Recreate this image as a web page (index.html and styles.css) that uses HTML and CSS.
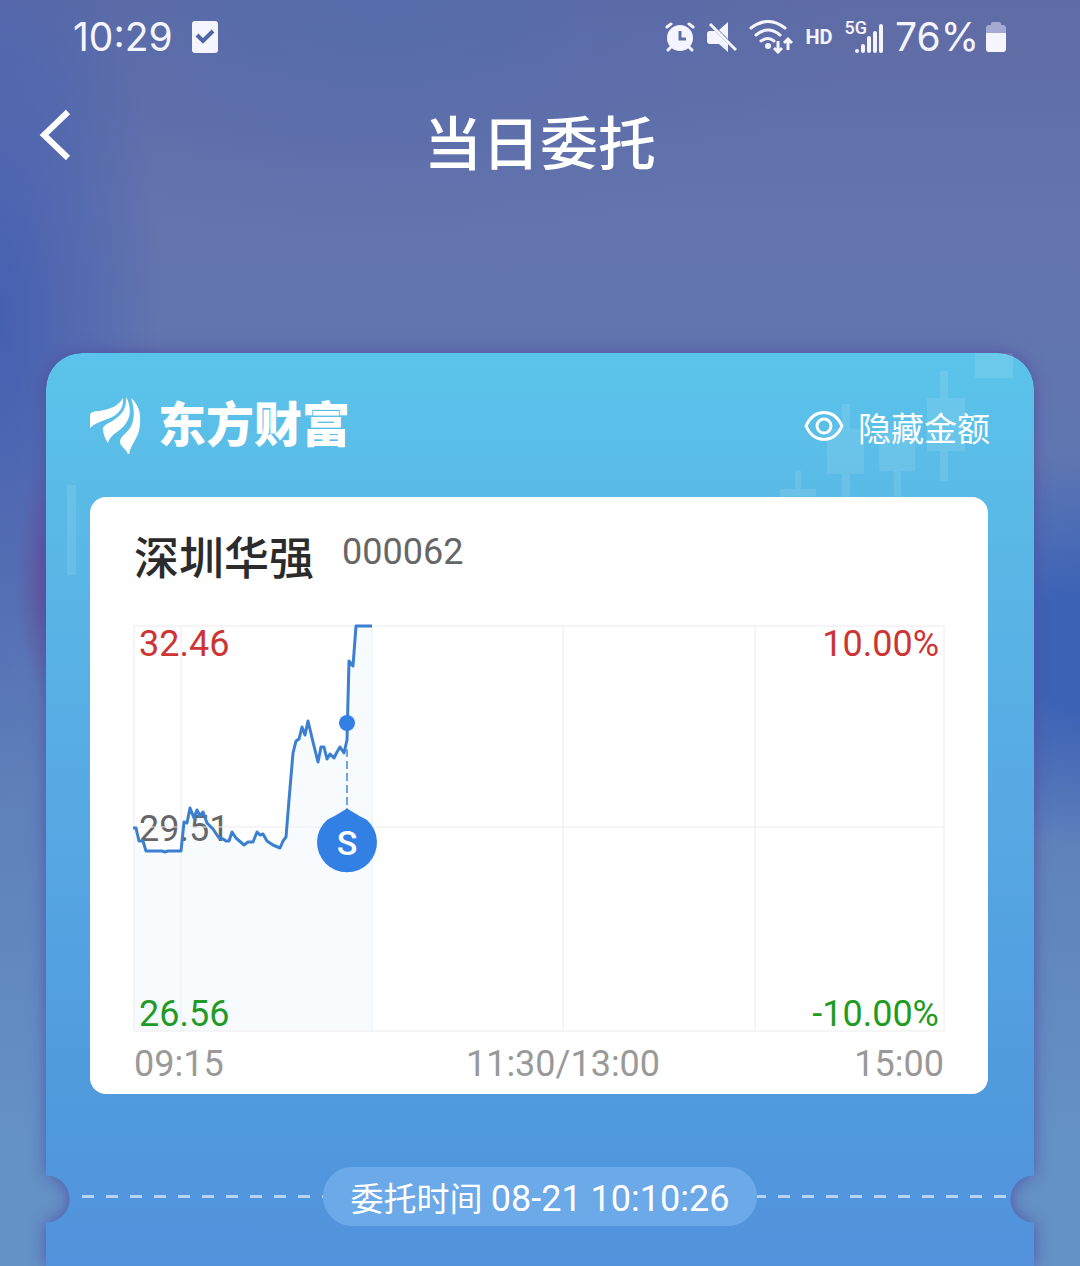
FILE: index.html
```html
<!DOCTYPE html>
<html lang="zh-CN">
<head>
    <meta charset="UTF-8">
    <meta name="viewport" content="width=device-width, initial-scale=1.0">
    <title>当日委托</title>
    <link rel="stylesheet" href="styles.css">
</head>
<body>

    <!-- Phone status bar -->
    <div class="status-bar">
        <div class="status-group status-left">
            <span class="status-text">10:29</span>
            <svg width="28" height="34" viewBox="0 0 28 34">
                <rect x="1" y="1" width="26" height="32" rx="3" fill="#f5f5ff"/>
                <path d="M6 15l6 6 10-10" fill="none" stroke="#4f66a6" stroke-width="4"/>
            </svg>
        </div>
        <div class="status-group status-right">
            <!-- alarm -->
            <svg width="30" height="30" viewBox="0 0 30 30">
                <circle cx="15" cy="16" r="13" fill="#f5f5ff"/>
                <path d="M2 5l4-3M28 5l-4-3M6 25l-3 3M24 25l3 3" stroke="#f5f5ff" stroke-width="3" stroke-linecap="round"/>
                <path d="M15 9v8h6" fill="none" stroke="#5f6fa8" stroke-width="3"/>
            </svg>
            <!-- muted speaker -->
            <svg width="30" height="30" viewBox="0 0 30 30">
                <path d="M3 9h5l13 13v8l-9-8H3q-3 0-3-3v-7q0-3 3-3zM12 8l9-8v17z" fill="#f5f5ff"/>
                <path d="M3 2l26 26" stroke="#f5f5ff" stroke-width="3"/>
            </svg>
            <!-- wifi -->
            <svg width="44" height="34" viewBox="0 0 44 34">
                <path d="M2 8q17-13 34 0M7 15q12-10 24 0M12 21q7-5 13 0" fill="none" stroke="#f5f5ff" stroke-width="3" stroke-linecap="round"/>
                <circle cx="19" cy="26" r="3" fill="#f5f5ff"/>
                <path d="M29 21v11M25 28l4 4 4-4M39 30V19M35 23l4-4 4 4" fill="none" stroke="#f5f5ff" stroke-width="3"/>
            </svg>
            <span class="status-hd">HD</span>
            <!-- signal -->
            <span class="status-signal">
                <span class="status-5g">5G</span>
                <svg width="28" height="30" viewBox="0 0 28 30">
                    <path d="M2 27v0M8 22v5M14 14v13M20 9v18M26 2v25" stroke="#f5f5ff" stroke-width="4" stroke-linecap="round"/>
                </svg>
            </span>
            <span class="status-text">76%</span>
            <!-- battery -->
            <svg class="battery" width="22" height="32" viewBox="0 0 22 32">
                <path d="M1 12V7q0-3 3-3h2V3q0-2 2-2h6q2 0 2 2v1h2q3 0 3 3v5z" fill="#a3abd2"/>
                <path d="M1 12h20v16q0 3-3 3H4q-3 0-3-3z" fill="#f5f5ff"/>
            </svg>
        </div>
    </div>

    <header class="nav-bar">
        <button class="back-btn" type="button" aria-label="返回">
            <svg width="32" height="54" viewBox="0 0 32 54">
                <path d="M29 4L5 27l24 23" fill="none" stroke="#fff" stroke-width="6"/>
            </svg>
        </button>
        <h1>当日委托</h1>
    </header>

    <main class="ticket">
        <div class="ticket-bg"></div>

        <!-- Faint candlesticks behind the card header -->
        <svg class="candles" width="240" height="150" viewBox="0 0 240 150" fill="#fff" fill-opacity=".1">
            <path d="M0 136h15v-18h6v18h15v14H0zM47 76h15V51h8v25h14v45H70v29h-8v-29H47zM99 76h36v42h-14v32h-7v-32H99zM147 45h13V18h8v27h17v53h-17v30h-8V98h-13zM195 0h38v25h-38z"/>
        </svg>

        <div class="ticket-header">
            <div class="brand">
                <svg width="52" height="58" viewBox="0 0 52 58" fill="#fff">
                    <path d="M0 17C4 13 8 15 14 13 23 11 29 8 33 1c1 8-3 15-11 19C14 24 6 25 0 31q-1-7 0-14z"/>
                    <path d="M36 0C37 12 31 18 24 23c-7 4-12 6-11 10q1 8 5 13c2-8 9-10 15-16C41 22 42 10 36 0z"/>
                    <path d="M41 1c7 6 10 14 9 25 0 14-8 18-11 31h-1C36 52 30 49 30 45c1-8 10-9 13-21 2-9 0-17-2-23z"/>
                </svg>
                <span>东方财富</span>
            </div>
            <button class="hide-btn" type="button">
                <svg width="40" height="32" viewBox="0 0 40 32" fill="none" stroke="#fff" stroke-width="3">
                    <path d="M2 16C10-2 30-2 38 16 30 34 10 34 2 16z"/>
                    <circle cx="20" cy="16" r="7"/>
                </svg>
                <span>隐藏金额</span>
            </button>
        </div>

        <section class="panel">
            <div class="stock">
                <h2>深圳华强</h2>
                <span class="stock-code">000062</span>
            </div>

            <div class="chart">
                <div class="chart-labels">
                    <span class="up">32.46</span>
                    <span class="up">10.00%</span>
                    <span class="flat">29.51</span>
                    <span></span>
                    <span class="down">26.56</span>
                    <span class="down">-10.00%</span>
                </div>
                <svg class="chart-plot" viewBox="0 0 810 406">
                    <path class="area" d="M0 202L2 202 5 215 9 215 12 225 47 225 50 196 53 197 56 182 60 192 63 184 66 190 69 186 73 197 79 203 85 212 92 215 95 215 98 206 102 212 110 219 114 216 119 216 123 206 126 209 129 208 133 215 146 222 149 215 152 211 155 174 159 127 162 115 165 113 168 101 171 109 174 95 179 116 184 136 187 121 190 121 193 133 196 128 200 132 206 121 210 127 213 114 214 74 215 35 219 40 222 0 238 0V405H0z"/>
                    <path class="grid" d="M0 0H810V405H0zM0 201H810M47 0V405M238 0V405M429 0V405M621 0V405"/>
                    <path class="line" d="M-1 202L2 202 5 215 9 215 12 225 28 225 31 226 34 225 47 225 50 196 53 197 56 182 60 192 63 184 66 190 69 186 73 197 79 203 85 212 89 213 92 215 95 215 98 206 102 212 110 219 114 216 119 216 123 206 126 209 129 208 133 215 139 219 146 222 149 215 152 211 155 174 159 127 162 115 165 113 168 101 171 109 174 95 179 116 184 136 187 121 190 121 193 133 196 128 200 132 203 126 206 121 210 127 213 114 214 74 215 35 219 40 222 0 238 0"/>
                    <path class="drop" d="M213 123V182"/>
                    <circle class="mark" cx="213" cy="97" r="8"/>
                    <path class="mark" d="M213 182q3 3 20 12a30 30 0 1 1-40 0q17-9 20-12z"/>
                    <text class="mark-text" x="213" y="229" text-anchor="middle">S</text>
                </svg>
            </div>

            <div class="chart-axis">
                <span>09:15</span>
                <span>11:30/13:00</span>
                <span>15:00</span>
            </div>
        </section>

        <!-- Tear line -->
        <div class="tear">
            <svg class="dash" height="3"><path d="M8 0H2000"/></svg>
            <p class="order-time">委托时间 <time>08-21 10:10:26</time></p>
            <svg class="dash" height="3"><path d="M-3 0H2000"/></svg>
        </div>
    </main>

</body>
</html>
```
FILE: styles.css
```css
* {
    box-sizing: border-box;
}

body {
    margin: 0;
    min-height: 100vh;
    display: flex;
    flex-direction: column;
    overflow-x: hidden;
    font-family: Roboto, "Noto Sans CJK SC", sans-serif;
    color: #fff;
    background:
        radial-gradient(ellipse 34px 120px at 50px 580px, rgba(98, 76, 152, 0.9), transparent),
        radial-gradient(ellipse 160px 480px at 0 320px, #4660b1, transparent),
        radial-gradient(ellipse 180px 200px at 100% 650px, #3d63b6 30%, transparent),
        radial-gradient(ellipse 500px 240px at 35% 0, rgba(84, 108, 174, 0.8), transparent),
        linear-gradient(#5f6ba4, #6373ad 200px, #6077b2 480px, #5f80bb 800px, #6491c6 1140px);
}

h1,
h2,
p {
    margin: 0;
}

button {
    padding: 0;
    border: none;
    background: none;
    color: inherit;
    font: inherit;
    cursor: pointer;
}

svg {
    display: block;
    flex-shrink: 0;
}

/* Status bar */
.status-bar {
    height: 74px;
    padding: 0 73px;
    display: flex;
    justify-content: space-between;
    align-items: center;
    color: #f5f5ff;
}

.status-group {
    display: flex;
    align-items: center;
}

.status-left {
    gap: 18px;
}

.status-right {
    gap: 12px;
}

.status-text {
    font-family: Inter, Roboto, sans-serif;
    font-size: 39px;
    line-height: 48px;
    font-weight: 400;
}

.status-hd {
    font-size: 20px;
    font-weight: 700;
}

.status-signal {
    display: flex;
    align-items: flex-start;
}

.status-signal svg {
    margin: 4px 0 0 -12px;
}

.status-5g {
    font-size: 18px;
    line-height: 16px;
    font-weight: 500;
}

.battery {
    margin-left: -6px;
}

/* Title bar */
.nav-bar {
    height: 122px;
    padding: 0 39px;
    display: grid;
    grid-template-columns: 1fr auto 1fr;
    align-items: center;
}

.back-btn {
    justify-self: start;
}

.nav-bar h1 {
    padding-top: 20px;
    font-size: 58px;
    line-height: 64px;
    font-weight: 500;
}

/* Ticket card */
.ticket {
    position: relative;
    flex: 1;
    margin: 157px 46px 0;
    padding: 0 46px 40px 44px;
}

/* The shadow follows the notches cut out of the card */
.ticket-bg {
    position: absolute;
    inset: 0;
    filter: drop-shadow(0 0 8px rgba(80, 72, 156, 0.8));
}

.ticket-bg::before {
    content: "";
    position: absolute;
    inset: 0;
    border-radius: 36px 36px 0 0;
    background: linear-gradient(#5bc4ea, #5abae6 150px, #57a9e3 450px, #509ade 740px, #5292dc 913px);
    mask:
        radial-gradient(circle at 0 846px, transparent 23px, #000 24px),
        radial-gradient(circle at 100% 846px, transparent 23px, #000 24px);
    mask-composite: intersect;
}

.ticket-bg::after {
    content: "";
    position: absolute;
    top: 132px;
    left: 21px;
    width: 9px;
    height: 90px;
    background: rgba(255, 255, 255, 0.1);
}

.candles {
    position: absolute;
    top: 0;
    right: 14px;
}

.ticket-header {
    position: relative;
    height: 144px;
    padding-top: 2px;
    display: flex;
    justify-content: space-between;
    align-items: center;
    margin-right: -2px;
}

.brand {
    display: flex;
    align-items: center;
    gap: 16px;
    font-size: 48px;
    line-height: 58px;
    font-weight: 900;
}

.hide-btn {
    display: flex;
    align-items: center;
    gap: 14px;
    font-size: 33px;
    line-height: 40px;
}

.hide-btn span {
    padding-top: 8px;
}

/* White panel */
.panel {
    position: relative;
    padding: 28px 44px 8px;
    border-radius: 16px;
    background: #fff;
}

.stock {
    display: flex;
    align-items: center;
    gap: 28px;
    margin-bottom: 37px;
}

.stock h2 {
    padding-top: 6px;
    font-size: 45px;
    line-height: 58px;
    font-weight: 500;
    color: #2b2b2b;
}

.stock-code {
    font-size: 36px;
    line-height: 40px;
    margin-bottom: 10px;
    color: #666;
}

/* Intraday chart */
.chart {
    display: grid;
}

.chart-plot,
.chart-labels {
    grid-area: 1 / 1;
}

.chart-plot {
    width: 100%;
    overflow: visible;
}

.chart-labels {
    padding: 0 5px;
    display: grid;
    grid-template-columns: 1fr 1fr;
    align-content: space-between;
    font-size: 36px;
    line-height: 36px;
}

.chart-labels span:nth-child(even) {
    text-align: right;
}

.area {
    fill: #3a8ee6;
    fill-opacity: 0.04;
}

.grid {
    fill: none;
    stroke: #ececef;
    stroke-width: 1;
}

.line {
    fill: none;
    stroke: #3b7fd0;
    stroke-width: 3;
    stroke-linejoin: round;
}

.drop {
    stroke: #6fa6e0;
    stroke-width: 2;
    stroke-dasharray: 8 4;
}

.mark {
    fill: #3280e4;
}

.mark-text {
    fill: #fff;
    font-size: 34px;
    font-weight: 500;
}

.up {
    color: #cc3533;
}

.flat {
    color: #666;
}

.down {
    color: #1f9c1f;
}

/* The midday break sits right of the middle because of the pre-open slot */
.chart-axis {
    display: grid;
    grid-template-columns: 1fr auto 1fr;
    margin-top: 10px;
    font-size: 36px;
    line-height: 44px;
    color: #999;
}

.chart-axis span:nth-child(2) {
    padding-left: 48px;
}

.chart-axis span:last-child {
    text-align: right;
}

/* Tear line with the order time */
.tear {
    position: relative;
    display: flex;
    align-items: center;
    margin: 73px -18px 0 -16px;
}

.dash {
    flex: 1;
    width: 0;
    overflow: hidden;
}

/* Only the lower half of the stroke is inside the svg */
.dash path {
    stroke: #b5d1f5;
    stroke-width: 6;
    stroke-dasharray: 12 12;
}

.order-time {
    padding: 6px 28px 0;
    border-radius: 29px;
    background: #6ca9e8;
    font-size: 33px;
    line-height: 52px;
}

.order-time time {
    font-size: 36px;
}
```
